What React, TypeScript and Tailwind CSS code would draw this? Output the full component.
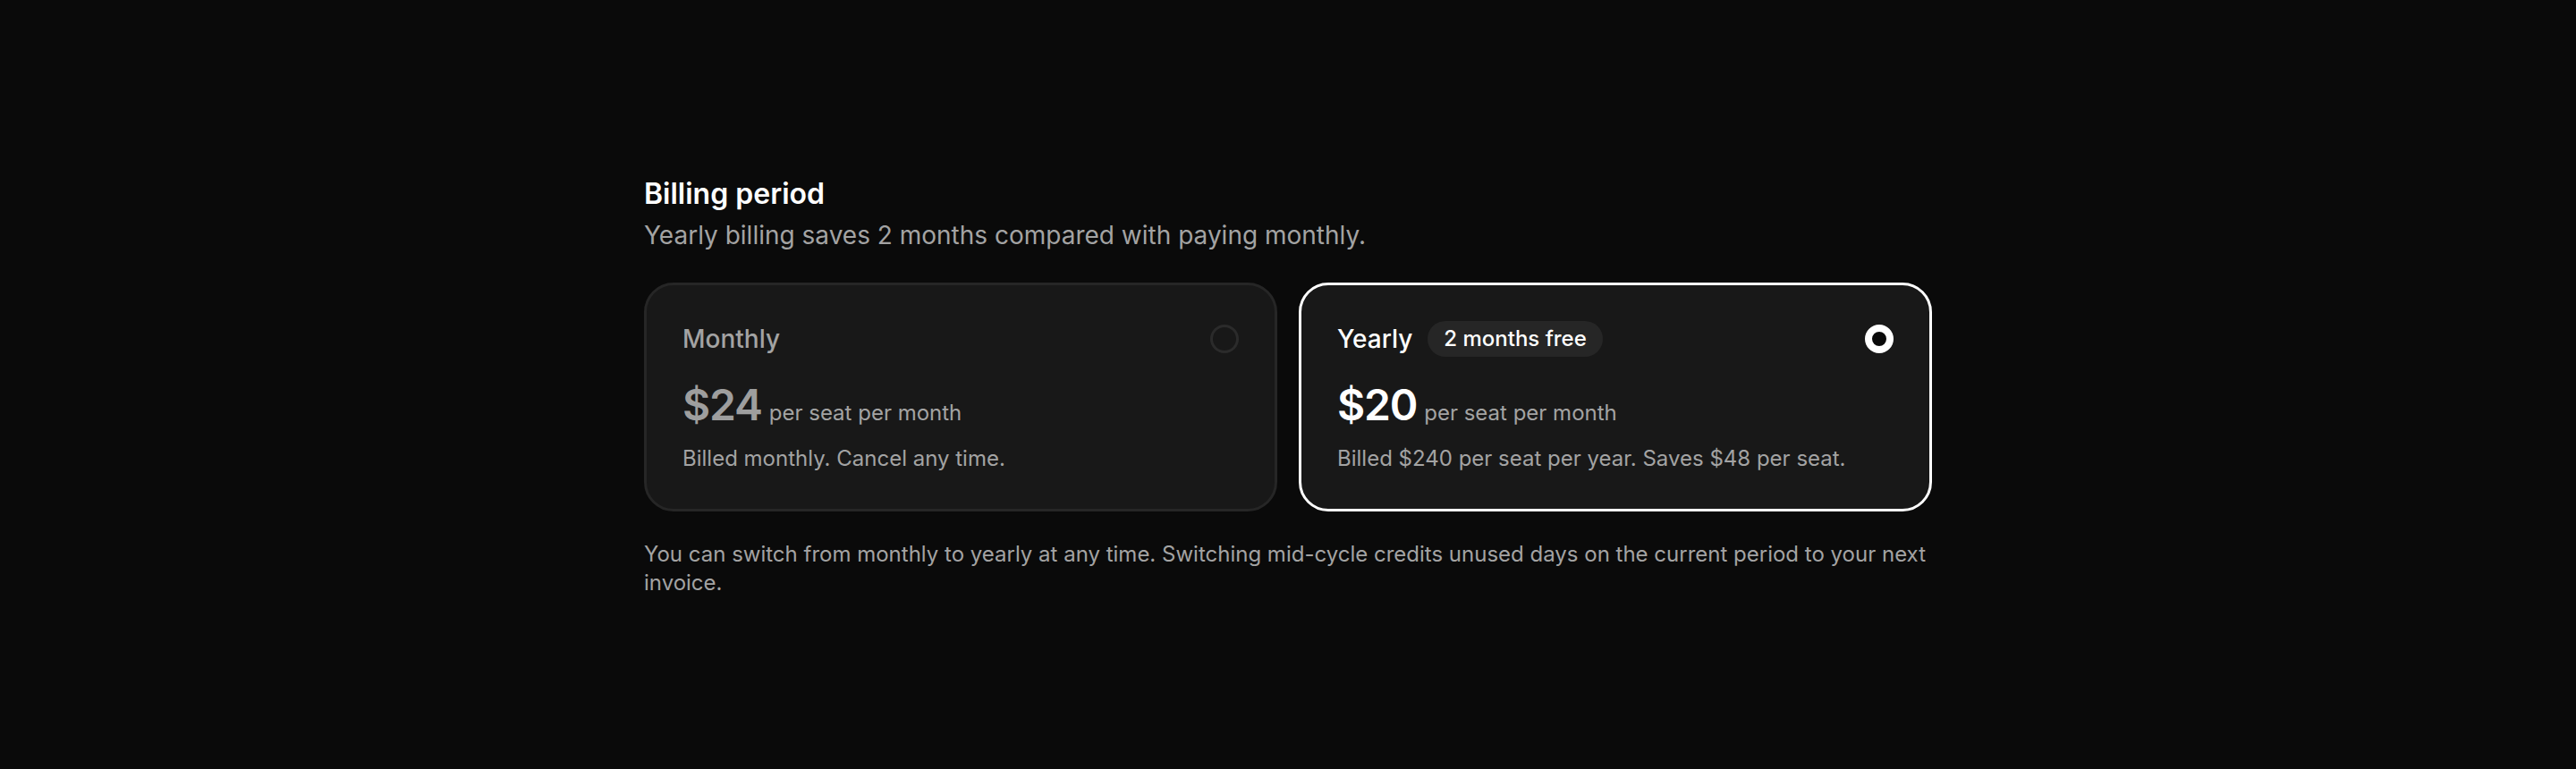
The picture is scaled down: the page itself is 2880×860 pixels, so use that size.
import React, { useState } from 'react';

type Plan = {
  id: 'monthly' | 'yearly';
  label: string;
  badge?: string;
  price: string;
  unit: string;
  note: string;
};

const plans: Plan[] = [
  {
    id: 'monthly',
    label: 'Monthly',
    price: '$24',
    unit: 'per seat per month',
    note: 'Billed monthly. Cancel any time.',
  },
  {
    id: 'yearly',
    label: 'Yearly',
    badge: '2 months free',
    price: '$20',
    unit: 'per seat per month',
    note: 'Billed $240 per seat per year. Saves $48 per seat.',
  },
];

const App: React.FC = () => {
  const [selected, setSelected] = useState<Plan['id']>('yearly');

  return (
    <div className="min-h-screen bg-[#0a0a0a] font-['Inter','Noto_Sans',sans-serif] antialiased">
      <div className="mx-auto w-[1440px] pt-[197px]">
        <h2 className="text-[32px] leading-[40px] font-semibold text-white">Billing period</h2>
        <p className="mt-[8px] text-[28px] leading-[36px] text-[#a3a3a3]">
          Yearly billing saves 2 months compared with paying monthly.
        </p>

        <div className="mt-[35px] grid grid-cols-2 gap-[24px]">
          {plans.map((plan) => {
            const active = plan.id === selected;
            return (
              <button
                key={plan.id}
                type="button"
                onClick={() => setSelected(plan.id)}
                className={`flex flex-col rounded-[33px] border-[3px] bg-[#181818] px-[40px] pt-[40px] pb-[42px] text-left ${
                  active ? 'border-white' : 'border-[#262626]'
                }`}
              >
                <div className="flex h-[40px] items-center justify-between">
                  <div className="flex items-center gap-[17px]">
                    <span
                      className={`text-[28px] leading-[36px] font-medium ${
                        active ? 'text-white' : 'text-[#a3a3a3]'
                      }`}
                    >
                      {plan.label}
                    </span>
                    {plan.badge && (
                      <span className="flex h-[40px] items-center rounded-full bg-[#262626] px-[18px] text-[24px] font-medium text-white">
                        {plan.badge}
                      </span>
                    )}
                  </div>
                  {active ? (
                    <span className="h-[32px] w-[32px] rounded-full border-[8px] border-white bg-[#0a0a0a]" />
                  ) : (
                    <span className="h-[32px] w-[32px] rounded-full border-[3px] border-[#2b2b2b]" />
                  )}
                </div>

                <div className="mt-[30px] flex items-baseline gap-[8px]">
                  <span
                    className={`text-[48px] leading-none font-semibold tracking-tight ${
                      active ? 'text-white' : 'text-[#9e9e9e]'
                    }`}
                  >
                    {plan.price}
                  </span>
                  <span className="text-[24px] leading-none text-[#a3a3a3]">{plan.unit}</span>
                </div>

                <p className="mt-[22px] text-[24px] leading-[28px] text-[#a3a3a3]">{plan.note}</p>
              </button>
            );
          })}
        </div>

        <p className="mt-[32px] text-[24px] leading-[32px] text-[#a3a3a3]">
          You can switch from monthly to yearly at any time. Switching mid-cycle credits unused days on the current
          period to your next invoice.
        </p>
      </div>
    </div>
  );
};

export default App;
